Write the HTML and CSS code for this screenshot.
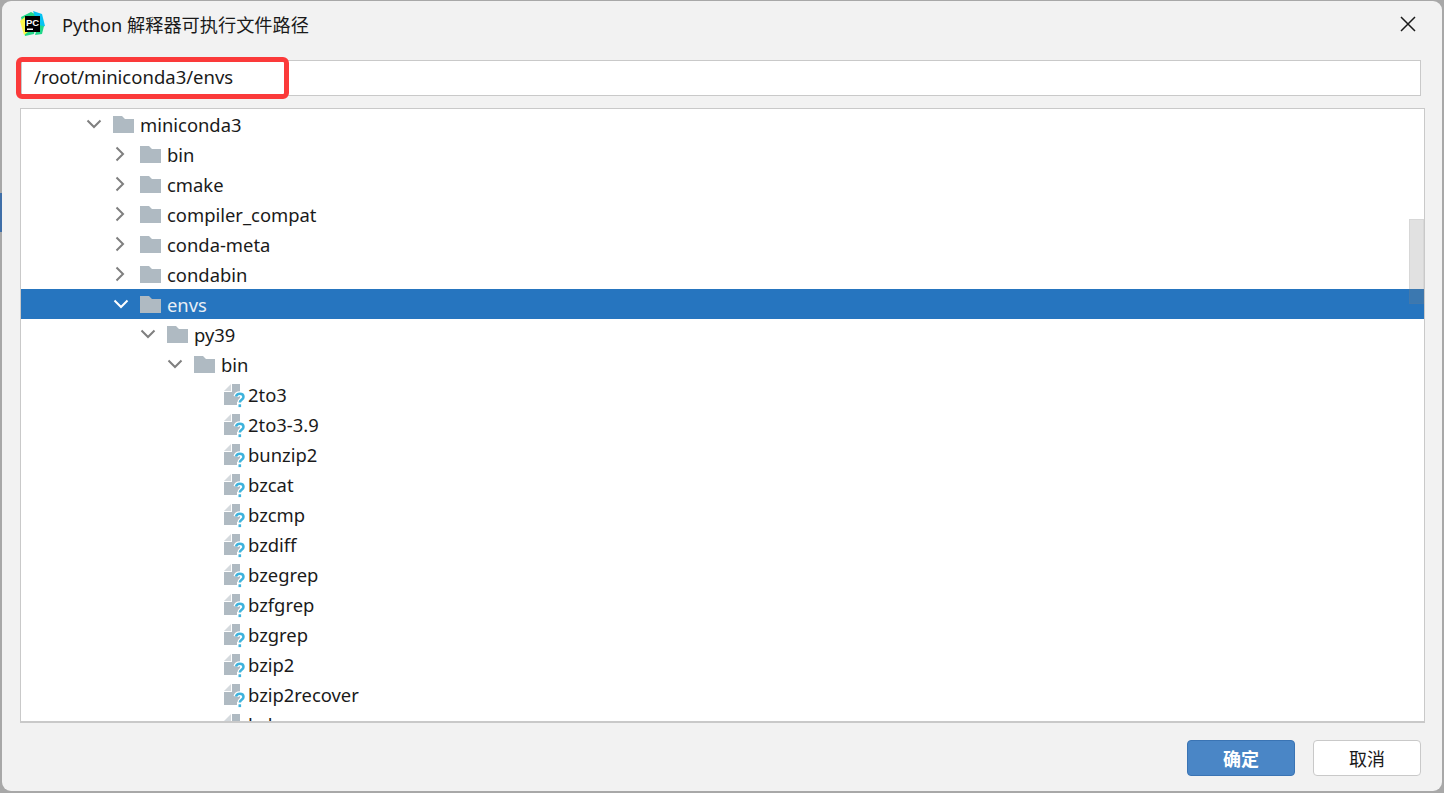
FILE: index.html
```html
<!DOCTYPE html>
<html lang="en">
  <head>
    <meta charset="UTF-8" />
    <title>Python 解释器可执行文件路径</title>
    <link rel="stylesheet" href="styles.css">
  </head>
  <body>
    <svg class="icon-defs" width="0" height="0">
      <defs>
        <symbol id="folder" viewBox="0 0 21 18">
          <path fill="#afbac2" d="M0 1h9l3 3h9v14H0z"/>
        </symbol>
        <symbol id="file" viewBox="0 0 24 30">
          <path fill="#d5dade" d="M0 12l7-7v7z"/>
          <path fill="#afbac2" d="M8 5h8v21H0V13h8z"/>
          <path fill="none" stroke="#fff" stroke-width="5" d="M12 17.500c.4-1.900 2-2.800 3.800-2.800 2.200 0 3.700 1.300 3.700 3.200 0 2.700-3.700 2.800-3.700 5.600"/>
          <rect x="13" y="23" width="6" height="6.500" fill="#fff"/>
          <path fill="none" stroke="#3fb3dc" stroke-width="2.500" d="M12 17.500c.4-1.900 2-2.800 3.800-2.800 2.200 0 3.700 1.300 3.700 3.200 0 2.700-3.700 2.800-3.700 5.600"/>
          <rect x="14.500" y="25.300" width="2.600" height="2.800" fill="#3fb3dc"/>
        </symbol>
        <symbol id="arrow-down" viewBox="0 0 16 10">
          <path fill="none" stroke="currentColor" stroke-width="2" d="M1.500 1.500L8 8l6.500-6.500"/>
        </symbol>
        <symbol id="arrow-right" viewBox="0 0 10 16">
          <path fill="none" stroke="currentColor" stroke-width="2" d="M1.500 1.500L8 8l-6.500 6.500"/>
        </symbol>
      </defs>
    </svg>

    <div class="backdrop-sliver"></div>

    <div class="dialog">
      <div class="title-bar">
        <svg class="app-logo" viewBox="0 0 26 26">
          <path fill="#21d789" d="M1 6l10-5 6 3-3 19-9 2z"/>
          <path fill="#fcf84a" d="M0 10l5-4 3 15-4 3z"/>
          <path fill="#07c3f2" d="M13 0l9 3 3 12-6 2z"/>
          <path fill="#21d789" d="M18 14l6 1-2 8-7 1z"/>
          <rect x="5" y="5" width="15" height="16" fill="#000"/>
          <text x="6" y="14.500" class="logo-text">PC</text>
          <rect x="7" y="17.500" width="6" height="1.500" fill="#fff"/>
        </svg>
        <span class="title-text">Python 解释器可执行文件路径</span>
        <svg class="close-icon" viewBox="0 0 16 16">
          <path fill="none" stroke="#1a1a1a" stroke-width="1.500" d="M1 1l14 14M15 1L1 15"/>
        </svg>
      </div>

      <div class="path-row">
        <div class="path-input">/root/miniconda3/envs</div>
        <div class="path-highlight"></div>
      </div>

      <div class="tree">
        <div class="tree-row depth-0"><svg class="arrow down"><use href="#arrow-down"/></svg><svg class="folder"><use href="#folder"/></svg><span>miniconda3</span></div>
        <div class="tree-row depth-1"><svg class="arrow right"><use href="#arrow-right"/></svg><svg class="folder"><use href="#folder"/></svg><span>bin</span></div>
        <div class="tree-row depth-1"><svg class="arrow right"><use href="#arrow-right"/></svg><svg class="folder"><use href="#folder"/></svg><span>cmake</span></div>
        <div class="tree-row depth-1"><svg class="arrow right"><use href="#arrow-right"/></svg><svg class="folder"><use href="#folder"/></svg><span>compiler_compat</span></div>
        <div class="tree-row depth-1"><svg class="arrow right"><use href="#arrow-right"/></svg><svg class="folder"><use href="#folder"/></svg><span>conda-meta</span></div>
        <div class="tree-row depth-1"><svg class="arrow right"><use href="#arrow-right"/></svg><svg class="folder"><use href="#folder"/></svg><span>condabin</span></div>
        <div class="tree-row depth-1 selected"><svg class="arrow down"><use href="#arrow-down"/></svg><svg class="folder"><use href="#folder"/></svg><span>envs</span></div>
        <div class="tree-row depth-2"><svg class="arrow down"><use href="#arrow-down"/></svg><svg class="folder"><use href="#folder"/></svg><span>py39</span></div>
        <div class="tree-row depth-3"><svg class="arrow down"><use href="#arrow-down"/></svg><svg class="folder"><use href="#folder"/></svg><span>bin</span></div>
        <div class="tree-row leaf"><svg class="file"><use href="#file"/></svg><span>2to3</span></div>
        <div class="tree-row leaf"><svg class="file"><use href="#file"/></svg><span>2to3-3.9</span></div>
        <div class="tree-row leaf"><svg class="file"><use href="#file"/></svg><span>bunzip2</span></div>
        <div class="tree-row leaf"><svg class="file"><use href="#file"/></svg><span>bzcat</span></div>
        <div class="tree-row leaf"><svg class="file"><use href="#file"/></svg><span>bzcmp</span></div>
        <div class="tree-row leaf"><svg class="file"><use href="#file"/></svg><span>bzdiff</span></div>
        <div class="tree-row leaf"><svg class="file"><use href="#file"/></svg><span>bzegrep</span></div>
        <div class="tree-row leaf"><svg class="file"><use href="#file"/></svg><span>bzfgrep</span></div>
        <div class="tree-row leaf"><svg class="file"><use href="#file"/></svg><span>bzgrep</span></div>
        <div class="tree-row leaf"><svg class="file"><use href="#file"/></svg><span>bzip2</span></div>
        <div class="tree-row leaf"><svg class="file"><use href="#file"/></svg><span>bzip2recover</span></div>
        <div class="tree-row leaf"><svg class="file"><use href="#file"/></svg><span>bzless</span></div>
        <div class="scroll-thumb"></div>
      </div>

      <div class="button-row">
        <button class="btn primary">确定</button>
        <button class="btn">取消</button>
      </div>
    </div>
  </body>
</html>
```

FILE: styles.css
```css
html, body {
  margin: 0;
  padding: 0;
  height: 100%;
}

body {
  background-color: #a8a8a8;
  font-family: "Noto Sans", "Noto Sans CJK SC", sans-serif;
  color: #1a1a1a;
  overflow: hidden;
}

.icon-defs {
  position: absolute;
}

.backdrop-sliver {
  position: absolute;
  top: 193px;
  left: 0;
  width: 2px;
  height: 39px;
  background-color: #3f6fa8;
  z-index: 2;
}

.dialog {
  box-sizing: border-box;
  width: 1440px;
  height: 790px;
  margin: 1px 0 0 2px;
  background-color: #f2f2f2;
  border-radius: 9px;
  display: flex;
  flex-direction: column;
  overflow: hidden;
}

.title-bar {
  display: flex;
  align-items: center;
  height: 45px;
  padding: 0 26px 0 18px;
}

.app-logo {
  width: 26px;
  height: 26px;
  margin-right: 16px;
}

.logo-text {
  font-family: "Liberation Sans", sans-serif;
  font-size: 9.500px;
  font-weight: bold;
  fill: #fff;
}

.title-text {
  font-size: 18.200px;
  flex: 1;
}

.close-icon {
  width: 16px;
  height: 16px;
}

.path-row {
  position: relative;
  margin: 14px 21px 0 19px;
}

.path-input {
  box-sizing: border-box;
  height: 36px;
  padding-left: 12px;
  background-color: #fff;
  border: 1px solid #c9c9c9;
  font-size: 18.500px;
  line-height: 32px;
}

.path-highlight {
  position: absolute;
  top: -3px;
  left: -5px;
  width: 273px;
  height: 42px;
  box-sizing: border-box;
  border: 5px solid #fb3a3a;
  border-radius: 6px;
}

.tree {
  position: relative;
  box-sizing: border-box;
  height: 615px;
  margin: 12px 17px 0 18px;
  background-color: #fff;
  border: 1px solid #c9c9c9;
  border-width: 1px 1px 2px 1px;
  overflow: hidden;
}

.tree-row {
  display: flex;
  align-items: center;
  height: 30px;
  font-size: 18.400px;
  white-space: nowrap;
}

.tree-row.selected {
  background-color: #2675bf;
  color: #e8eef5;
}

.depth-0 { padding-left: 65px; }
.depth-1 { padding-left: 92px; }
.depth-2 { padding-left: 119px; }
.depth-3 { padding-left: 146px; }

.leaf {
  padding-left: 203px;
}

.arrow {
  color: #7f7f7f;
}

.selected .arrow {
  color: #fff;
}

.arrow.down {
  width: 16px;
  height: 10px;
  margin-right: 11px;
}

.arrow.right {
  width: 10px;
  height: 16px;
  margin: 0 15px 0 2px;
}

.folder {
  width: 21px;
  height: 18px;
  margin-right: 6px;
}

.file {
  width: 24px;
  height: 30px;
  flex: none;
}

.scroll-thumb {
  position: absolute;
  top: 110px;
  right: 0;
  width: 15px;
  height: 85px;
  box-sizing: border-box;
  background-color: rgba(128, 128, 128, 0.24);
  border: 1px solid rgba(128, 128, 128, 0.1);
}

.button-row {
  display: flex;
  justify-content: flex-end;
  gap: 18px;
  padding: 17px 21px 0 0;
}

.btn {
  width: 108px;
  height: 36px;
  box-sizing: border-box;
  padding: 0;
  background-color: #fff;
  border: 1px solid #c9c9c9;
  border-radius: 4px;
  font-family: "Noto Sans CJK SC", sans-serif;
  font-size: 18px;
  color: #1a1a1a;
}

.btn.primary {
  background-color: #4a86c6;
  border-color: #3a74b4;
  color: #fff;
  font-weight: bold;
}
```
